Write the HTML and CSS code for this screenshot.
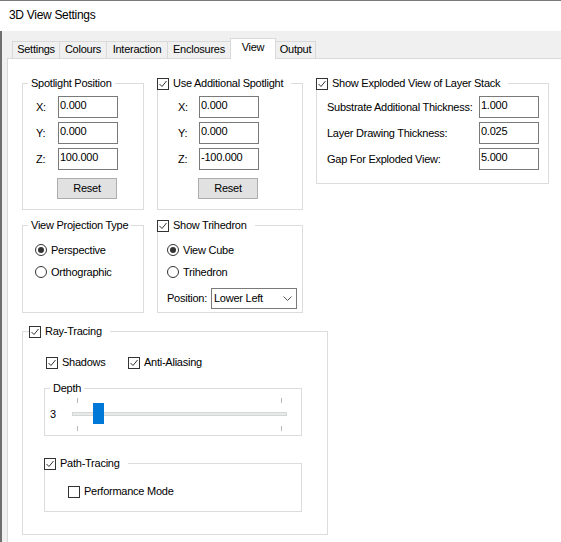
FILE: index.html
```html
<!DOCTYPE html>
<html lang="en">
<head>
<meta charset="utf-8">
<title>3D View Settings</title>
<link rel="stylesheet" href="styles.css">
</head>
<body>
<div class="window">
  <div class="titlebar">3D View Settings</div>
  <div class="main">
    <div class="tabs">
      <div class="tab w-settings">Settings</div>
      <div class="tab w-colours">Colours</div>
      <div class="tab w-interaction">Interaction</div>
      <div class="tab w-enclosures">Enclosures</div>
      <div class="tab w-view active">View</div>
      <div class="tab w-output">Output</div>
    </div>
    <div class="panel">
      <div class="grid">
        <fieldset class="group">
          <legend class="t">Spotlight Position</legend>
          <div class="body spot">
            <div class="fld"><span class="lbl l-spot">X:</span><div class="tb">0.000</div></div>
            <div class="fld"><span class="lbl l-spot">Y:</span><div class="tb">0.000</div></div>
            <div class="fld"><span class="lbl l-spot">Z:</span><div class="tb">100.000</div></div>
            <div class="btn b-spot">Reset</div>
          </div>
        </fieldset>

        <fieldset class="group">
          <legend class="c"><span class="cb"><svg viewBox="0 0 10 10"><polyline points="1.5,5 4,7.5 8.5,2"/></svg></span><span>Use Additional Spotlight</span></legend>
          <div class="body add">
            <div class="fld"><span class="lbl l-add">X:</span><div class="tb">0.000</div></div>
            <div class="fld"><span class="lbl l-add">Y:</span><div class="tb">0.000</div></div>
            <div class="fld"><span class="lbl l-add">Z:</span><div class="tb">-100.000</div></div>
            <div class="btn b-add">Reset</div>
          </div>
        </fieldset>

        <fieldset class="group exploded">
          <legend class="c"><span class="cb"><svg viewBox="0 0 10 10"><polyline points="1.5,5 4,7.5 8.5,2"/></svg></span><span>Show Exploded View of Layer Stack</span></legend>
          <div class="body expl">
            <div class="fld"><span class="lbl l-expl">Substrate Additional Thickness:</span><div class="tb">1.000</div></div>
            <div class="fld"><span class="lbl l-expl">Layer Drawing Thickness:</span><div class="tb">0.025</div></div>
            <div class="fld"><span class="lbl l-expl">Gap For Exploded View:</span><div class="tb">5.000</div></div>
          </div>
        </fieldset>

        <fieldset class="group">
          <legend class="t">View Projection Type</legend>
          <div class="body proj">
            <div class="opt"><span class="rd on"></span><span>Perspective</span></div>
            <div class="opt"><span class="rd"></span><span>Orthographic</span></div>
          </div>
        </fieldset>

        <fieldset class="group">
          <legend class="c"><span class="cb"><svg viewBox="0 0 10 10"><polyline points="1.5,5 4,7.5 8.5,2"/></svg></span><span>Show Trihedron</span></legend>
          <div class="body tri">
            <div class="opt"><span class="rd on"></span><span>View Cube</span></div>
            <div class="opt"><span class="rd"></span><span>Trihedron</span></div>
            <div class="posrow">
              <span class="lbl l-pos">Position:</span>
              <div class="dd"><span>Lower Left</span><svg class="chev" viewBox="0 0 9 5"><polyline points="0.5,0.5 4.5,4.5 8.5,0.5"/></svg></div>
            </div>
          </div>
        </fieldset>
      </div>

      <fieldset class="group ray">
        <legend class="c ray-lg"><span class="cb"><svg viewBox="0 0 10 10"><polyline points="1.5,5 4,7.5 8.5,2"/></svg></span><span>Ray-Tracing</span></legend>
        <div class="ray-opts">
          <div class="chk w-shadows"><span class="cb"><svg viewBox="0 0 10 10"><polyline points="1.5,5 4,7.5 8.5,2"/></svg></span><span>Shadows</span></div>
          <div class="chk"><span class="cb"><svg viewBox="0 0 10 10"><polyline points="1.5,5 4,7.5 8.5,2"/></svg></span><span>Anti-Aliasing</span></div>
        </div>

        <fieldset class="group depth">
          <legend class="t">Depth</legend>
          <div class="depth-body">
            <span class="depth-val">3</span>
            <div class="slider">
              <span class="tick t-l t-top"></span>
              <span class="tick t-r t-top"></span>
              <span class="track"></span>
              <span class="thumb"></span>
              <span class="tick t-l t-bot"></span>
              <span class="tick t-r t-bot"></span>
            </div>
          </div>
        </fieldset>

        <fieldset class="group path">
          <legend class="c"><span class="cb"><svg viewBox="0 0 10 10"><polyline points="1.5,5 4,7.5 8.5,2"/></svg></span><span>Path-Tracing</span></legend>
          <div class="path-body">
            <div class="chk"><span class="cb"></span><span>Performance Mode</span></div>
          </div>
        </fieldset>
      </fieldset>
    </div>
  </div>
</div>
</body>
</html>
```

FILE: styles.css
```css
* { box-sizing: border-box; }

html, body {
  margin: 0;
  padding: 0;
}

body {
  width: 561px;
  height: 542px;
  overflow: hidden;
  background: #fff;
  color: #000;
  font-family: "Liberation Sans", Arial, sans-serif;
  font-size: 11px;
  line-height: 13px;
  letter-spacing: -0.25px;
}

.window {
  width: 561px;
  height: 542px;
  display: flex;
  flex-direction: column;
}

.titlebar {
  height: 31px;
  flex: none;
  border-top: 1px solid #7a7a7a;
  background: #fff;
  padding-left: 9px;
  font-size: 12px;
  line-height: 28px;
  letter-spacing: -0.3px;
}

.main {
  flex: 1;
  min-height: 0;
  display: flex;
  flex-direction: column;
  background: #f0f0f0;
  border-left: 2px solid #6e6e6e;
}

/* tabs */
.tabs {
  height: 27px;
  flex: none;
  display: flex;
  align-items: flex-end;
  padding-left: 10px;
}

.tab {
  height: 17px;
  margin-left: -1px;
  border: 1px solid #d9d9d9;
  border-bottom: none;
  background: #f0f0f0;
  text-align: center;
  line-height: 15px;
}

.tab:first-child { margin-left: 0; }

.tab.active {
  position: relative;
  z-index: 1;
  height: 21px;
  margin-bottom: -1px;
  background: #fff;
  line-height: 17px;
  padding-bottom: 3px;
}

.w-settings { width: 48px; }
.w-colours { width: 48px; }
.w-interaction { width: 62px; }
.w-enclosures { width: 64px; }
.w-view { width: 46px; }
.w-output { width: 41px; }

/* panel */
.panel {
  flex: 1;
  margin-left: 5px;
  background: #fff;
  border-top: 1px solid #d9d9d9;
  border-left: 1px solid #d9d9d9;
  padding: 18px 0 0 14px;
}

.grid {
  display: grid;
  grid-template-columns: 122px 146px 233px;
  grid-template-rows: 133px 94px;
  column-gap: 13px;
  row-gap: 9px;
}

fieldset.group {
  margin: 0;
  padding: 0;
  min-width: 0;
  border: 1px solid #dcdcdc;
}

legend {
  margin: 0;
  padding: 0;
  height: 13px;
  line-height: 13px;
}

legend.t {
  padding: 0 3px;
  margin-left: 5px;
}

legend.c {
  display: flex;
  align-items: center;
  gap: 4px;
  margin-left: -1px;
  padding: 0 8px 0 0;
}

.cb {
  flex: none;
  display: block;
  width: 12px;
  height: 12px;
  border: 1px solid #333;
  background: #fff;
}

.cb svg {
  display: block;
  width: 10px;
  height: 10px;
  fill: none;
  stroke: #333;
  stroke-width: 1;
}

.rd {
  flex: none;
  width: 12px;
  height: 12px;
  border: 1px solid #333;
  border-radius: 50%;
  background: #fff;
  display: flex;
  align-items: center;
  justify-content: center;
}

.rd.on::after {
  content: "";
  width: 6px;
  height: 6px;
  border-radius: 50%;
  background: #333;
}

/* text-box rows */
.body { padding-top: 6px; }
.spot { padding-left: 13px; }
.add { padding-left: 20px; }
.expl { padding-left: 10px; }

.fld {
  display: flex;
  align-items: center;
  height: 22px;
}

.fld + .fld { margin-top: 4px; }

.lbl { flex: none; white-space: nowrap; }
.l-spot { width: 22px; }
.l-add { width: 21px; }
.l-expl { width: 152px; }
.l-pos { width: 44px; }

.tb {
  flex: none;
  width: 60px;
  height: 22px;
  border: 1px solid #7a7a7a;
  background: #fff;
  padding: 2px 0 0 1px;
  line-height: 13px;
}

.btn {
  width: 60px;
  height: 21px;
  margin-top: 8px;
  background: #e1e1e1;
  border: 1px solid #adadad;
  text-align: center;
  line-height: 19px;
}

.b-spot { margin-left: 21px; }
.b-add { margin-left: 20px; }

fieldset.exploded {
  align-self: start;
  height: 107px;
}

/* radio groups */
.proj { padding: 7px 0 0 12px; }
.tri { padding: 7px 0 0 9px; }

.opt {
  display: flex;
  align-items: center;
  gap: 4px;
  height: 22px;
}

.posrow {
  display: flex;
  align-items: center;
  margin-top: 5px;
}

.dd {
  width: 86px;
  height: 21px;
  border: 1px solid #7a7a7a;
  background: #fff;
  display: flex;
  align-items: center;
  justify-content: space-between;
  padding: 0 4px 0 2px;
}

.chev {
  display: block;
  width: 9px;
  height: 5px;
  fill: none;
  stroke: #555;
  stroke-width: 1;
}

/* ray tracing */
fieldset.ray {
  width: 306px;
  height: 210px;
  margin-top: 12px;
}

legend.ray-lg { margin-left: 6px; }

.ray-opts {
  display: flex;
  align-items: center;
  height: 13px;
  margin-top: 18px;
  padding-left: 23px;
}

.chk {
  display: flex;
  align-items: center;
  gap: 4px;
  height: 13px;
}

.w-shadows { width: 82px; }

fieldset.depth {
  width: 258px;
  height: 54px;
  margin: 13px 0 0 21px;
}

.depth-body {
  display: flex;
  align-items: center;
  padding: 3px 0 0 5px;
}

.depth-val {
  width: 22px;
  flex: none;
}

.slider {
  position: relative;
  width: 215px;
  height: 33px;
  flex: none;
}

.track {
  position: absolute;
  left: 0;
  top: 14px;
  width: 215px;
  height: 4px;
  background: #e7eaea;
  border: 1px solid #d6d6d6;
}

.thumb {
  position: absolute;
  left: 21px;
  top: 5px;
  width: 11px;
  height: 21px;
  background: #0078d7;
}

.tick {
  position: absolute;
  width: 1px;
  height: 5px;
  background: #b8b8b8;
}

.t-l { left: 5px; }
.t-r { left: 209px; }
.t-top { top: 0; }
.t-bot { top: 28px; }

fieldset.path {
  width: 258px;
  height: 55px;
  margin: 21px 0 0 21px;
}

.path-body {
  padding: 15px 0 0 23px;
}
```
